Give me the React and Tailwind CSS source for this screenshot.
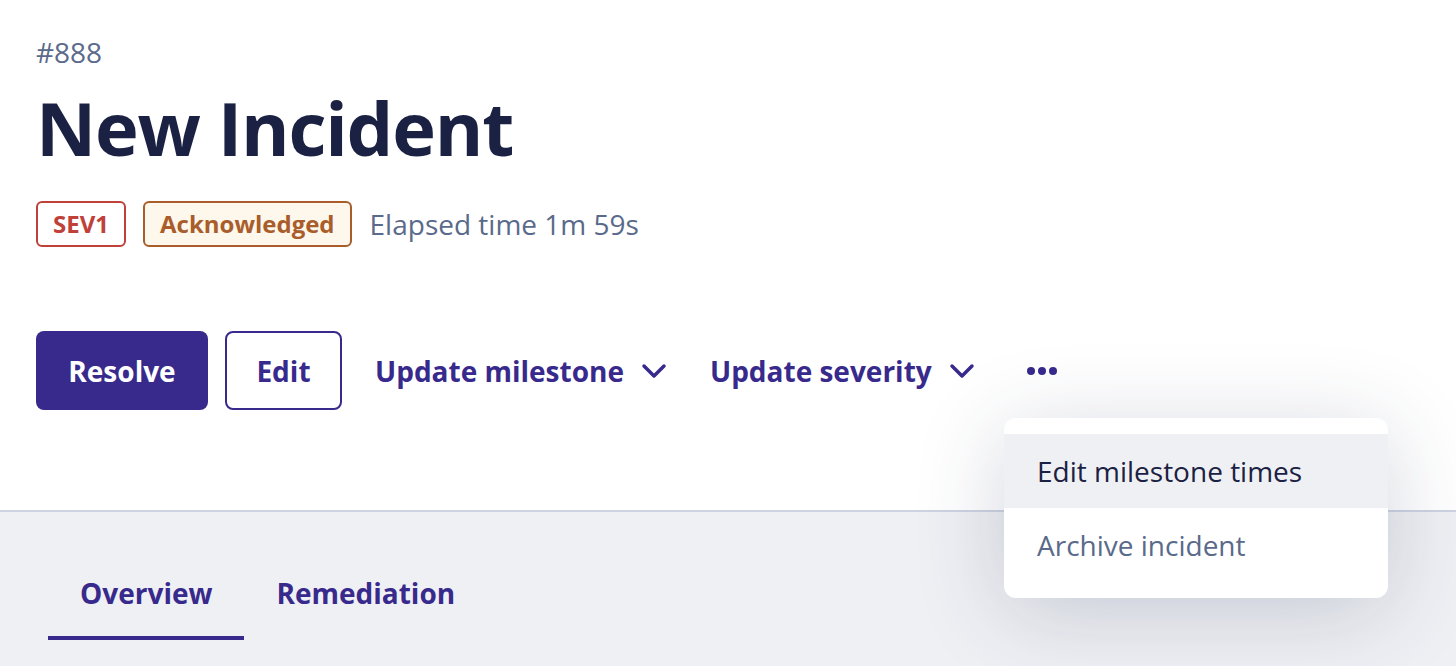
import { useState } from "react";

const ChevronDown = () => (
  <svg width="26" height="16" viewBox="0 0 26 16" fill="none" className="ml-[17px]">
    <path d="M3 3l10 10L23 3" stroke="#382a8c" strokeWidth="3.5" strokeLinecap="round" strokeLinejoin="round" />
  </svg>
);

export default function App() {
  const [tab, setTab] = useState("overview");

  return (
    <div className="relative w-[1456px] h-[666px] overflow-hidden bg-[#eff0f4] font-['Open_Sans',sans-serif]">
      {/* HEADER */}
      <div className="bg-white border-b-2 border-[#cdd3e1] h-[512px] pl-[36px] pt-[32px]">
        <p className="text-[28px] leading-[40px] text-[#5a6a8a]">#888</p>
        <h1 className="mt-[8px] text-[74px] leading-[96px] font-bold text-[#1b2142] tracking-[-1.2px]">New Incident</h1>

        <div className="mt-[25px] flex items-center">
          <span className="h-[46px] px-[15px] flex items-center border-2 border-[#c0403a] rounded-[6px] text-[#c0403a] text-[24px] font-bold">SEV1</span>
          <span className="ml-[17px] h-[46px] px-[15px] flex items-center border-2 border-[#a95d2b] bg-[#fdf7ec] rounded-[6px] text-[#a95d2b] text-[24px] font-bold">Acknowledged</span>
          <span className="ml-[18px] text-[28px] text-[#5a6a8a]">Elapsed time 1m 59s</span>
        </div>

        <div className="mt-[84px] flex items-center">
          <button className="h-[79px] w-[172px] rounded-[8px] bg-[#382a8c] text-white text-[28px] font-bold">Resolve</button>
          <button className="ml-[17px] h-[79px] w-[117px] rounded-[8px] border-2 border-[#382a8c] bg-white text-[#382a8c] text-[28px] font-bold">Edit</button>
          <button className="ml-[33px] flex items-center text-[#382a8c] text-[28px] font-bold">
            Update milestone
            <ChevronDown />
          </button>
          <button className="ml-[43px] flex items-center text-[#382a8c] text-[28px] font-bold">
            Update severity
            <ChevronDown />
          </button>
          <button className="ml-[52px] flex items-center gap-[3px]">
            <span className="w-[8px] h-[8px] rounded-full bg-[#382a8c]" />
            <span className="w-[8px] h-[8px] rounded-full bg-[#382a8c]" />
            <span className="w-[8px] h-[8px] rounded-full bg-[#382a8c]" />
          </button>
        </div>
      </div>

      {/* TABS */}
      <div className="flex pl-[48px] pt-[60px]">
        <button
          onClick={() => setTab("overview")}
          className={`px-[32px] pb-[22px] text-[28px] leading-[42px] font-bold text-[#382a8c] border-b-4 ${tab === "overview" ? "border-[#382a8c]" : "border-transparent"}`}
        >
          Overview
        </button>
        <button
          onClick={() => setTab("remediation")}
          className={`px-[32px] pb-[22px] text-[28px] leading-[42px] font-bold text-[#382a8c] border-b-4 ${tab === "remediation" ? "border-[#382a8c]" : "border-transparent"}`}
        >
          Remediation
        </button>
      </div>

      {/* MENU */}
      <div className="absolute left-[1004px] top-[418px] w-[384px] py-[16px] bg-white rounded-[12px] shadow-[0_14px_90px_rgba(40,50,90,0.2)]">
        <div className="h-[74px] flex items-center px-[33px] bg-[#eff0f4] text-[28px] text-[#1b2142]">Edit milestone times</div>
        <div className="h-[74px] flex items-center px-[33px] text-[28px] text-[#5a6a8a]">Archive incident</div>
      </div>
    </div>
  );
}
